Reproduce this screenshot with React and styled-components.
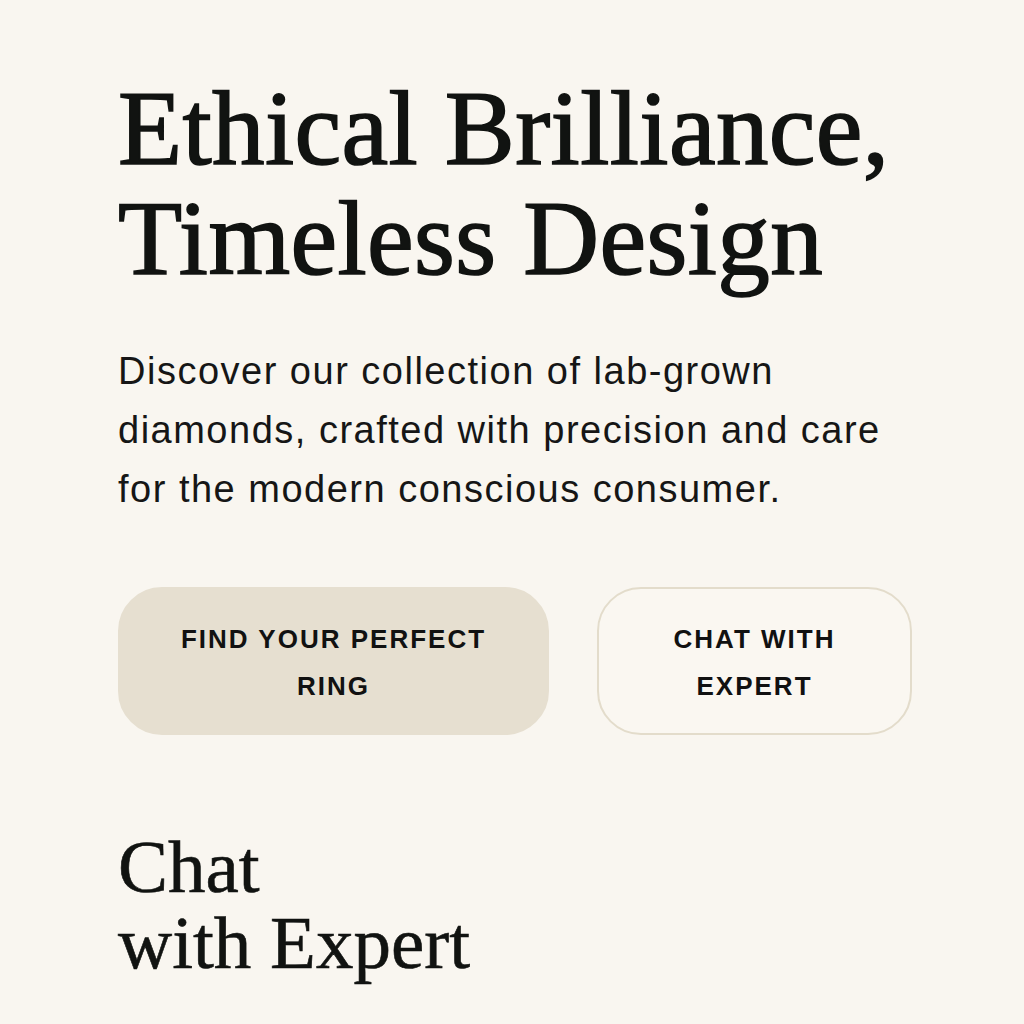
import styled, { createGlobalStyle } from "styled-components";

const GlobalStyle = createGlobalStyle`
  html, body {
    margin: 0;
    padding: 0;
    background: #f9f6f0;
  }
  body {
    width: 1024px;
    height: 1024px;
    overflow: hidden;
  }
`;

const Page = styled.main`
  box-sizing: border-box;
  width: 1024px;
  height: 1024px;
  padding: 74px 0 0 118px;
  background: #f9f6f0;
  color: #141414;
`;

const Headline = styled.h1`
  margin: 0;
  font-family: "Liberation Serif", "Times New Roman", serif;
  font-weight: 400;
  font-size: 105px;
  line-height: 110px;
  letter-spacing: 0.4px;
  color: #111311;
  -webkit-text-stroke: 1.6px #111311;
`;

const Lead = styled.p`
  margin: 48px 0 0;
  font-family: "Liberation Sans", Arial, sans-serif;
  font-size: 38px;
  line-height: 59px;
  letter-spacing: 1.5px;
  color: #161616;
`;

const Actions = styled.div`
  display: flex;
  gap: 48px;
  margin-top: 68px;
`;

const Button = styled.button`
  box-sizing: border-box;
  width: ${(p) => p.$w}px;
  height: 148px;
  border-radius: 44px;
  border: 2px solid ${(p) => (p.$primary ? "#e6dfd0" : "#e3dccb")};
  background: ${(p) => (p.$primary ? "#e6dfd0" : "#faf7f1")};
  font-family: "Liberation Sans", Arial, sans-serif;
  font-weight: 700;
  font-size: 26px;
  line-height: 47px;
  letter-spacing: 2px;
  text-transform: uppercase;
  color: #111;
  padding: 4px 30px 0;
  cursor: pointer;
`;

const Subhead = styled.h2`
  margin: 94px 0 0;
  font-family: "Liberation Serif", "Times New Roman", serif;
  font-weight: 400;
  font-size: 75px;
  line-height: 76px;
  color: #111311;
  -webkit-text-stroke: 0.6px #111311;
`;

export default function App() {
  return (
    <>
      <GlobalStyle />
      <Page>
        <Headline>
          Ethical Brilliance,
          <br />
          Timeless Design
        </Headline>
        <Lead>
          Discover our collection of lab-grown
          <br />
          diamonds, crafted with precision and care
          <br />
          for the modern conscious consumer.
        </Lead>
        <Actions>
          <Button $primary $w={431}>
            Find your perfect
            <br />
            ring
          </Button>
          <Button $w={315}>
            Chat with
            <br />
            expert
          </Button>
        </Actions>
        <Subhead>
          Chat
          <br />
          with Expert
        </Subhead>
      </Page>
    </>
  );
}
